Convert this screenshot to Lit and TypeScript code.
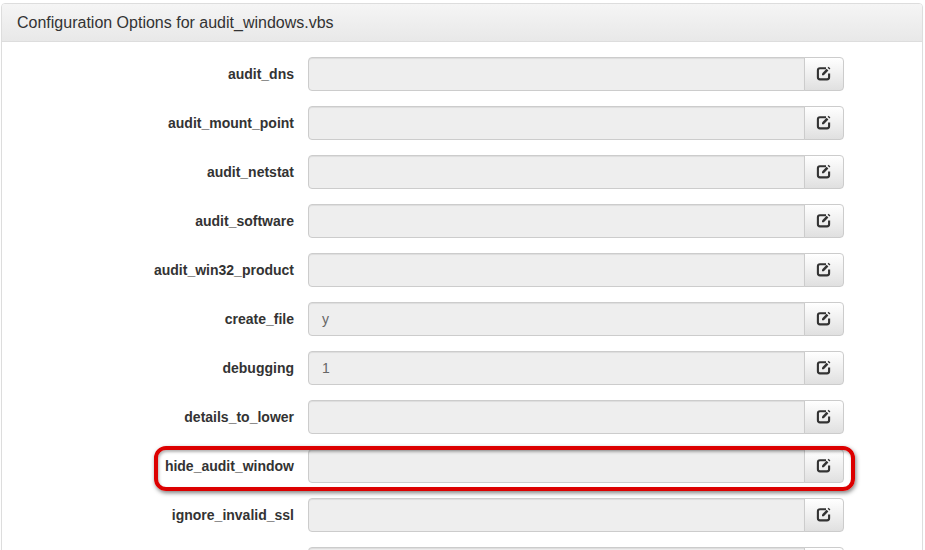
import { LitElement, html, css } from "lit";
import { customElement } from "lit/decorators.js";

const OPTIONS: { name: string; value: string; marked?: boolean }[] = [
  { name: "audit_dns", value: "" },
  { name: "audit_mount_point", value: "" },
  { name: "audit_netstat", value: "" },
  { name: "audit_software", value: "" },
  { name: "audit_win32_product", value: "" },
  { name: "create_file", value: "y" },
  { name: "debugging", value: "1" },
  { name: "details_to_lower", value: "" },
  { name: "hide_audit_window", value: "", marked: true },
  { name: "ignore_invalid_ssl", value: "" },
  // only the top of this row is on screen, its label falls below the fold
  { name: "", value: "" },
];

@customElement("app-root")
export class AppRoot extends LitElement {
  static styles = css`
    :host {
      display: block;
      height: 550px;
      overflow: hidden;
      background: #fff;
      font-family: "Liberation Sans", Arial, sans-serif;
      color: #333;
    }

    .panel {
      margin: 3px 2px 0 1px;
      border: 1px solid #ddd;
      border-radius: 4px;
      box-shadow: 0 1px 1px rgba(0, 0, 0, 0.05);
    }

    .panel-heading {
      height: 37px;
      padding-left: 15px;
      display: flex;
      align-items: center;
      font-size: 16px;
      color: #333;
      background: linear-gradient(to bottom, #f5f5f5 0%, #e8e8e8 100%);
      border-bottom: 1px solid #ddd;
      border-radius: 3px 3px 0 0;
    }

    .panel-body {
      padding: 15px 78px 15px 0;
      display: flex;
      flex-direction: column;
      gap: 15px;
    }

    .row {
      position: relative;
      display: flex;
      align-items: center;
    }

    label {
      width: 292px;
      margin-right: 14px;
      text-align: right;
      font-size: 14px;
      font-weight: bold;
    }

    .group {
      flex: 1;
      display: flex;
      height: 34px;
    }

    .input {
      flex: 1;
      display: flex;
      align-items: center;
      padding-left: 13px;
      font-size: 14px;
      color: #666;
      background: #eee;
      border: 1px solid #ccc;
      border-radius: 4px 0 0 4px;
      box-shadow: inset 0 1px 1px rgba(0, 0, 0, 0.075);
    }

    .btn {
      width: 40px;
      margin-left: -1px;
      display: flex;
      align-items: center;
      justify-content: center;
      background: linear-gradient(to bottom, #fff 0%, #e0e0e0 100%);
      border: 1px solid #ccc;
      border-radius: 0 4px 4px 0;
      box-sizing: border-box;
    }

    .btn svg {
      width: 16px;
      height: 16px;
      display: block;
      margin-top: -2px;
    }

    .mark {
      position: absolute;
      left: 152px;
      right: -11px;
      top: -3px;
      bottom: -8px;
      border: 4px solid #dc0000;
      border-radius: 12px;
      box-shadow: 1px 2px 4px rgba(0, 0, 0, 0.5), inset 1px 2px 3px rgba(0, 0, 0, 0.3);
      pointer-events: none;
    }
  `;

  render() {
    return html`
      <div class="panel">
        <div class="panel-heading">Configuration Options for audit_windows.vbs</div>
        <div class="panel-body">
          ${OPTIONS.map(
            (o) => html`
              <div class="row">
                <label>${o.name}</label>
                <div class="group">
                  <div class="input">${o.value}</div>
                  <div class="btn">
                    <svg viewBox="0 0 16 16">
                      <path
                        d="M10 3.2H4C2.6 3.2 1.9 3.9 1.9 5.3v7c0 1.4.7 2.1 2.1 2.1h7c1.4 0 2.1-.7 2.1-2.1V8.6"
                        fill="none"
                        stroke="#333"
                        stroke-width="2.1"
                      />
                      <path d="M6 8.4l4.6-4.6 1.8 1.8-4.6 4.6H6z" fill="#333" />
                      <path d="M11.6 2.8l1-1 1.8 1.8-1 1z" fill="#333" />
                    </svg>
                  </div>
                </div>
                ${o.marked ? html`<div class="mark"></div>` : ""}
              </div>
            `
          )}
        </div>
      </div>
    `;
  }
}
